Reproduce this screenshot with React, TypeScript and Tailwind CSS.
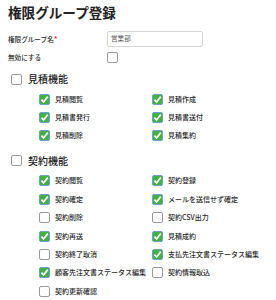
import type { ReactNode } from 'react'

type Perm = { label: string; checked: boolean }

const estimatePerms: Perm[] = [
  { label: '見積閲覧', checked: true },
  { label: '見積作成', checked: true },
  { label: '見積書発行', checked: true },
  { label: '見積書送付', checked: true },
  { label: '見積削除', checked: true },
  { label: '見積集約', checked: true },
]

const contractPerms: Perm[] = [
  { label: '契約閲覧', checked: true },
  { label: '契約登録', checked: true },
  { label: '契約確定', checked: true },
  { label: 'メールを送信せず確定', checked: true },
  { label: '契約削除', checked: false },
  { label: '契約CSV出力', checked: false },
  { label: '契約再送', checked: true },
  { label: '見積成約', checked: true },
  { label: '契約終了取消', checked: false },
  { label: '支払先注文書ステータス編集', checked: true },
  { label: '顧客先注文書ステータス編集', checked: true },
  { label: '契約情報取込', checked: false },
  { label: '契約更新確認', checked: false },
]

function Box({ checked }: { checked: boolean }) {
  if (checked) {
    return (
      <span className="flex h-[11px] w-[11px] shrink-0 items-center justify-center rounded-[2px] border border-[#6a9fd9] bg-[#3fb23f]">
        <svg viewBox="0 0 10 10" className="h-[9px] w-[9px]">
          <path d="M1.6 5.2 L4 7.8 L8.6 1.8" fill="none" stroke="#fff" strokeWidth="1.9" />
        </svg>
      </span>
    )
  }
  return <span className="block h-[11px] w-[11px] shrink-0 rounded-[2px] border border-[#9a9a9a] bg-white" />
}

function Section({ title, perms }: { title: string; perms: Perm[] }) {
  return (
    <div>
      <div className="ml-[3px] flex h-[11px] items-center gap-[6px]">
        <Box checked={false} />
        <span className="text-[10px] font-medium leading-none text-[#222]">{title}</span>
      </div>
      <div className="ml-[31px] mt-[5.5px] grid grid-cols-[113px_1fr]">
        {perms.map((p) => (
          <div key={p.label} className="flex h-[18.4px] items-center gap-[5px]">
            <Box checked={p.checked} />
            <span className="whitespace-nowrap text-[7px] font-medium leading-none text-[#2a2a2a]">{p.label}</span>
          </div>
        ))}
      </div>
    </div>
  )
}

function FormRow({ label, children }: { label: ReactNode; children: ReactNode }) {
  return (
    <div className="flex items-center">
      <div className="w-[99px] text-[6.6px] font-medium leading-none text-[#2a2a2a]">{label}</div>
      {children}
    </div>
  )
}

export default function App() {
  return (
    <div
      className="h-[300px] w-[276px] overflow-hidden bg-white px-[8px] pt-[4px]"
      style={{ fontFamily: '"Noto Sans CJK JP", "Noto Sans", sans-serif' }}
    >
      <h1 className="text-[13.6px] font-bold leading-[16px] text-[#222]">権限グループ登録</h1>

      <div className="mt-[11px]">
        <FormRow
          label={
            <>
              権限グループ名<span className="text-[8px] text-[#e0302b]">*</span>
            </>
          }
        >
          <div className="flex h-[16px] w-[96px] items-center rounded-[2px] border border-[#d4d4d4] bg-white px-[3px] text-[6.6px] text-[#555]">
            営業部
          </div>
        </FormRow>
      </div>

      <div className="mt-[5px]">
        <FormRow label="無効にする">
          <Box checked={false} />
        </FormRow>
      </div>

      <div className="mt-[10.5px]">
        <Section title="見積機能" perms={estimatePerms} />
      </div>

      <div className="mt-[10px]">
        <Section title="契約機能" perms={contractPerms} />
      </div>
    </div>
  )
}
